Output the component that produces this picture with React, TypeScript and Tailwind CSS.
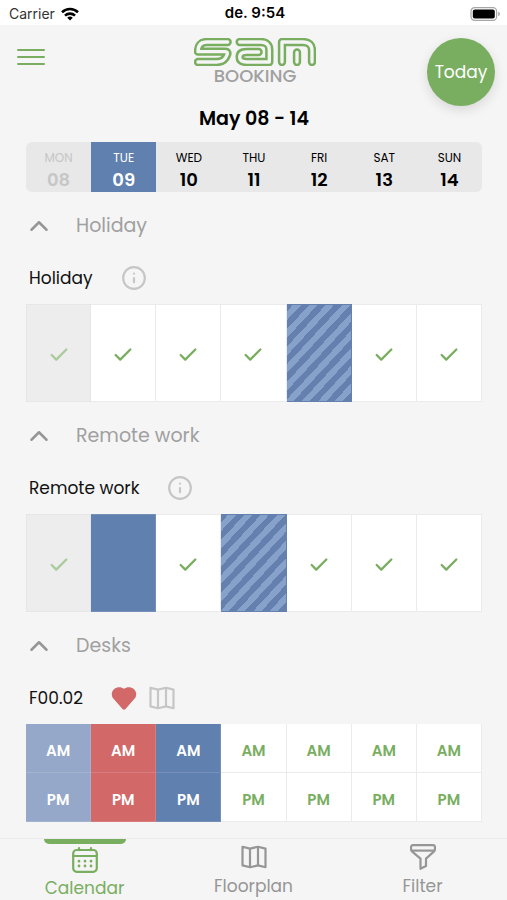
import React from 'react';
import { Check, ChevronUp, Info } from 'lucide-react';

type CellState = 'free' | 'past' | 'booked' | 'pending' | 'pastBooked' | 'taken';

interface Day {
  name: string;
  date: string;
}

const days: Day[] = [
  { name: 'MON', date: '08' },
  { name: 'TUE', date: '09' },
  { name: 'WED', date: '10' },
  { name: 'THU', date: '11' },
  { name: 'FRI', date: '12' },
  { name: 'SAT', date: '13' },
  { name: 'SUN', date: '14' },
];

const holiday: CellState[] = ['past', 'free', 'free', 'free', 'pending', 'free', 'free'];
const remote: CellState[] = ['past', 'booked', 'free', 'pending', 'free', 'free', 'free'];
const desk: CellState[] = ['pastBooked', 'taken', 'booked', 'free', 'free', 'free', 'free'];

const cellStyles: Record<CellState, string> = {
  free: 'bg-white text-[#79ae61] border-[#ebebeb]',
  past: 'bg-[#ededed] text-[#a9cb9b] border-[#e6e6e6]',
  booked: 'bg-[#6080af] text-white border-[#7590b9]',
  pending:
    'bg-[repeating-linear-gradient(-47deg,#6480ae_0px,#6480ae_6px,#86a2ca_6px,#86a2ca_12px)] border-[#6480ae]',
  pastBooked: 'bg-[#95a8c9] text-white border-[#a3b3cf]',
  taken: 'bg-[#d26868] text-white border-[#d87d7d]',
};

const WifiIcon = () => (
  <svg viewBox="0 0 18 14" className="h-[14px] w-[18px]" fill="none" stroke="black" strokeWidth="2.6">
    <path d="M1 5.2a11.5 11.5 0 0 1 16 0" />
    <path d="M4 8.6a7.2 7.2 0 0 1 10 0" />
    <path d="M9 13.6 6.2 10.8a4 4 0 0 1 5.6 0Z" fill="black" stroke="none" />
  </svg>
);

const BatteryIcon = () => (
  <svg viewBox="0 0 31 14" className="h-[14px] w-[31px]">
    <rect x="1" y="0.7" width="25.6" height="12.6" rx="3.6" fill="white" stroke="#a6a6a6" strokeWidth="1.2" />
    <rect x="2.8" y="2.4" width="22" height="9.2" rx="2" fill="black" />
    <path d="M28.2 4.8c2.2.6 2.2 3.8 0 4.4Z" fill="#a6a6a6" />
  </svg>
);

const MapIcon = ({ className }: { className: string }) => (
  <svg viewBox="0 0 26 24" className={className} fill="none" stroke="currentColor" strokeWidth="2.2" strokeLinejoin="round">
    <path d="M1.5 1.8 9 3.6 17 1.8l7.5 1.8v18.6L17 20.4l-8 1.8-7.5-1.8Z" />
    <path d="M9 3.6v18.6M17 1.8v18.6" />
  </svg>
);

const CalendarIcon = () => (
  <svg viewBox="0 0 26 26" className="h-[26px] w-[26px]" fill="none" stroke="currentColor" strokeWidth="2.2" strokeLinecap="round">
    <rect x="1.2" y="3" width="23.6" height="21.8" rx="3.5" />
    <path d="M1 9h24M7 1.2v2M19 1.2v2" />
    <path d="M7 14.2h.01M13 14.2h.01M19 14.2h.01M7 19h.01M13 19h.01M19 19h.01" strokeWidth="2.8" />
  </svg>
);

const FilterIcon = () => (
  <svg viewBox="0 0 26 26" className="h-[26px] w-[26px]" fill="none" stroke="currentColor" strokeWidth="2.2" strokeLinejoin="round">
    <path d="M3 1.2h20a2 2 0 0 1 2 2V5c0 1.2-.4 1.8-1.2 2.6L16 14.6V22l-5.5 2.8V14.6L2.2 7.6C1.4 6.8 1 6.2 1 5V3.2a2 2 0 0 1 2-2Z" />
    <path d="M1.5 6.6h23" />
  </svg>
);

const HeartIcon = () => (
  <svg viewBox="0 0 26 23" className="h-[23px] w-[26px]" fill="#d26868">
    <path d="M13 1.8C15.6-.4 20-.4 22.8 2c3.2 2.8 3.2 7.4.2 10.2l-8.3 9.6a2.3 2.3 0 0 1-3.4 0L3 12.2C0 9.4 0 4.8 3.2 2 6-.4 10.4-.4 13 1.8Z" />
  </svg>
);

const letterS = 'M101 12H38C20 12 12 24 12 41H94C100 41 102 45 99 51C94 65 84 72 68 72H12';
const letterA = 'M137 12H200Q226 12 226 36V72H158Q137 72 137 57T158 42H194';
const letterM = 'M264 72V12H326Q354 12 354 38V72M309 43V72';

const Logo = () => (
  <svg viewBox="0 0 366 84" className="h-[28px] w-[122px]" fill="none" strokeLinecap="round" strokeLinejoin="round">
    <g stroke="#79ae61" strokeWidth="25">
      <path d={letterS} />
      <path d={letterA} />
      <path d={letterM} />
    </g>
    <g stroke="#f5f5f5" strokeWidth="10">
      <path d={letterS} />
      <path d={letterA} />
      <path d={letterM} />
    </g>
  </svg>
);

const StatusBar = () => (
  <div className="grid h-[25px] grid-cols-3 items-center bg-white pt-[2px] pl-[9px] pr-[6px] font-[Inter,sans-serif] text-[14px] text-[#333]">
    <div className="flex items-center gap-[6px]">
      <span>Carrier</span>
      <WifiIcon />
    </div>
    <span className="text-center text-[15px] font-semibold text-black">de. 9:54</span>
    <div className="flex justify-end">
      <BatteryIcon />
    </div>
  </div>
);

const Header = () => (
  <header className="grid grid-cols-3 items-start pl-[17px] pr-3 pt-[13px]">
    <button type="button" aria-label="Menu" className="flex h-[38px] w-[28px] flex-col justify-center gap-[5px]">
      <span className="h-[2px] w-full rounded-full bg-[#79ae61]" />
      <span className="h-[2px] w-full rounded-full bg-[#79ae61]" />
      <span className="h-[2px] w-full rounded-full bg-[#79ae61]" />
    </button>
    <div className="flex flex-col items-center pr-[2px]">
      <Logo />
      <span className="text-[18px] leading-5 font-medium text-[#a0a0a0]">BOOKING</span>
    </div>
    <button
      type="button"
      className="h-[68px] w-[68px] justify-self-end rounded-full bg-[#79ae61] pt-[2px] text-[17px] text-white shadow-[0_4px_12px_rgba(0,0,0,0.12)]"
    >
      Today
    </button>
  </header>
);

const WeekBar = () => (
  <div className="grid grid-cols-7 overflow-hidden rounded-md bg-[#e8e8e8]">
    {days.map((day, index) => (
      <button
        key={day.date}
        type="button"
        className={`flex h-[50px] flex-col items-center justify-center pt-[5px] ${
          index === 0 ? 'text-[#c6c6c6]' : index === 1 ? 'bg-[#6080af] text-white' : 'text-black'
        }`}
      >
        <span className="text-[12px] leading-5">{day.name}</span>
        <span className="text-[18px] leading-6 font-semibold">{day.date}</span>
      </button>
    ))}
  </div>
);

interface SectionProps {
  title: string;
  label: string;
  icons: React.ReactNode;
  children: React.ReactNode;
}

const Section: React.FC<SectionProps> = ({ title, label, icons, children }) => (
  <section>
    <button type="button" className="flex h-[68px] w-full items-center gap-[22px] text-[19px] text-[#a0a0a0]">
      <ChevronUp className="-ml-[2px] h-[30px] w-[30px] text-[#969696]" />
      <span>{title}</span>
    </button>
    <div className="mb-2 flex h-[36px] items-center gap-[28px] pl-[3px]">
      <h2 className="pt-[2px] text-[17px] text-[#111]">{label}</h2>
      <div className="flex items-center gap-3 text-[#c6c6c6]">{icons}</div>
    </div>
    <div className="grid grid-cols-7">{children}</div>
  </section>
);

const DayCells = ({ label, states }: { label: string; states: CellState[] }) => (
  <>
    {states.map((state, index) => (
      <button
        key={index}
        type="button"
        aria-label={`${label} ${days[index].name}`}
        className={`flex h-[98px] items-center justify-center border-y border-r first:border-l ${cellStyles[state]}`}
      >
        {(state === 'free' || state === 'past') && <Check strokeWidth={2.5} className="mt-1 h-[22px] w-[22px]" />}
      </button>
    ))}
  </>
);

const DeskCells = ({ states }: { states: CellState[] }) => (
  <>
    {['AM', 'PM'].map((half) =>
      states.map((state, index) => (
        <button
          key={half + index}
          type="button"
          className={`flex h-[49px] items-center justify-center border-r border-b pt-[6px] text-[15px] font-semibold ${cellStyles[state]}`}
        >
          {half}
        </button>
      ))
    )}
  </>
);

const BottomNav = () => (
  <nav className="grid h-[62px] grid-cols-3 border-t border-[#ebebeb] text-[17px] leading-6 text-[#969696]">
    <a href="#calendar" className="flex flex-col items-center text-[#79ae61]">
      <span className="mb-[3px] h-[5px] w-[82px] rounded-b-md bg-[#79ae61]" />
      <CalendarIcon />
      <span className="pt-[3px]">Calendar</span>
    </a>
    <a href="#floorplan" className="flex flex-col items-center pt-[5px]">
      <MapIcon className="h-[26px] w-[26px]" />
      <span className="pt-[4px]">Floorplan</span>
    </a>
    <a href="#filter" className="flex flex-col items-center pt-[5px]">
      <FilterIcon />
      <span className="pt-[4px]">Filter</span>
    </a>
  </nav>
);

const App = () => (
  <div className="flex min-h-screen flex-col bg-[#f5f5f5] font-[Poppins,Inter,sans-serif]">
    <StatusBar />
    <Header />
    <main className="flex-1 pr-[25px] pb-4 pl-[26px]">
      <h1 className="mb-[10px] text-center text-[19px] leading-[26px] font-semibold">May 08 - 14</h1>
      <WeekBar />
      <Section title="Holiday" label="Holiday" icons={<Info className="h-[26px] w-[26px]" />}>
        <DayCells label="Holiday" states={holiday} />
      </Section>
      <Section title="Remote work" label="Remote work" icons={<Info className="h-[26px] w-[26px]" />}>
        <DayCells label="Remote work" states={remote} />
      </Section>
      <Section
        title="Desks"
        label="F00.02"
        icons={
          <>
            <HeartIcon />
            <MapIcon className="h-[24px] w-[26px]" />
          </>
        }
      >
        <DeskCells states={desk} />
      </Section>
    </main>
    <BottomNav />
  </div>
);

export default App;
